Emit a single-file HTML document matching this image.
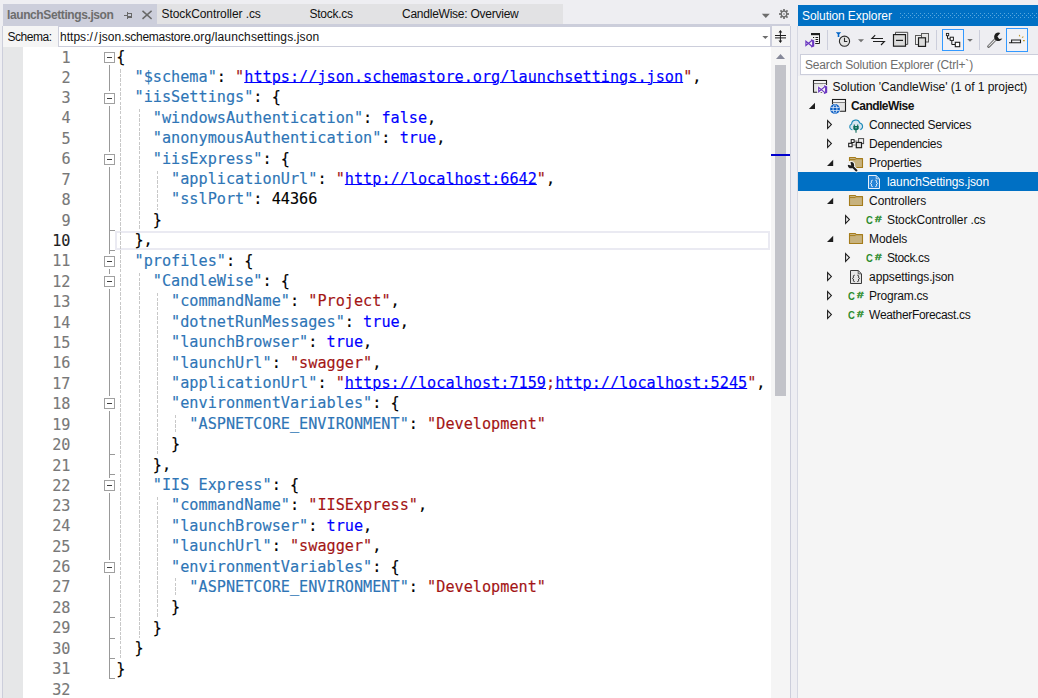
<!DOCTYPE html>
<html lang="en"><head><meta charset="utf-8"><title>launchSettings.json - CandleWise</title>
<style>
html,body{margin:0;padding:0}
body{width:1038px;height:698px;background:#EEEEF2;position:relative;overflow:hidden;font-family:"Liberation Sans",sans-serif;font-size:12px;color:#111}
.a{position:absolute}
.t{position:absolute;white-space:pre;line-height:16px;height:16px}
.code{position:absolute;left:116.2px;white-space:pre;font-family:"DejaVu Sans Mono","Liberation Mono",monospace;font-size:15.19px;line-height:20px;height:20px;color:#000;-webkit-text-stroke:0.15px}
.ln{position:absolute;left:30px;width:40.5px;text-align:right;white-space:pre;font-family:"DejaVu Sans Mono","Liberation Mono",monospace;font-size:15.17px;line-height:20px;height:20px;color:#787878;-webkit-text-stroke:0.12px}
.k{color:#2E75B6}.s{color:#A31515}.b{color:#0000FF}.u{color:#0000FF;text-decoration:underline;text-decoration-thickness:1px;text-underline-offset:0.4px}
.fb{position:absolute;left:104px;width:9px;height:9px;border:1px solid #A0A0A0;background:#fff;box-shadow:0 -2px 0 #fff,0 2px 0 #fff}
.fb i{position:absolute;left:2px;top:4px;width:5px;height:1px;background:#404040}
.g{position:absolute;width:1px;background:repeating-linear-gradient(to bottom,#C8C8C8 0,#C8C8C8 3.5px,transparent 3.5px,transparent 4.65px)}
.row{position:absolute;left:798px;width:240px;height:19px}
</style></head><body>

<div class="a" style="left:3px;top:4px;width:154px;height:22px;background:#CCCEDB"></div>
<div class="a" style="left:157px;top:4px;width:406px;height:20px;background:#E2E2E4"></div>
<div class="a" style="left:3px;top:24px;width:787px;height:2px;background:#CCCEDB"></div>
<div class="t" style="left:7.00px;top:6.84px;letter-spacing:-0.396px;color:#6D6D6D;font-weight:bold;">launchSettings.json</div>
<div class="t" style="left:161.50px;top:5.84px;letter-spacing:-0.074px;">StockController .cs</div>
<div class="t" style="left:309.50px;top:5.84px;letter-spacing:-0.268px;">Stock.cs</div>
<div class="t" style="left:402.00px;top:5.84px;letter-spacing:-0.244px;">CandleWise: Overview</div>
<svg class="a" style="left:123px;top:10px" width="11" height="11" viewBox="123 10 11 11"><path d="M124 15h4v1h-4zM127 12h1v7h-1zM128 13h4v1h-4zM131 13h1v4h-1zM128 16h4v2h-4z" fill="#686868"/></svg>
<svg class="a" style="left:142px;top:10px" width="10" height="10" viewBox="0 0 10 10"><path d="M0.5 0.9L9.6 8.9M9.6 0.9L0.5 8.9" fill="none" stroke="#686868" stroke-width="1.5"/></svg>
<svg class="a" style="left:755px;top:4px" width="40" height="20" viewBox="755 4 40 20"><path d="M761.8 13.8H769.8L765.8 17.9Z" fill="#6D6D6D"/><g fill="#6D6D6D" transform="translate(784 14)"><circle r="3.4"/><rect x="-0.85" y="-5" width="1.7" height="10"/><rect x="-5" y="-0.85" width="10" height="1.7"/><g transform="rotate(45)"><rect x="-0.85" y="-5" width="1.7" height="10"/><rect x="-5" y="-0.85" width="10" height="1.7"/></g><circle r="2.15" fill="#EEEEF2"/><circle r="0.8"/></g></svg>
<div class="a" style="left:3px;top:26px;width:787px;height:21px;background:#F5F5F5"></div>
<div class="t" style="left:7.50px;top:29.04px;letter-spacing:-0.480px;">Schema:</div>
<div class="a" style="left:58px;top:26px;width:711px;height:19px;background:#fff;border:1px solid #CCCEDB"></div>
<div class="t" style="left:60.00px;top:29.04px;"><span style="letter-spacing:0.025px">https:</span><span style="letter-spacing:1.466px">//</span><span style="letter-spacing:0.010px">json.</span><span style="letter-spacing:-0.253px">schemastore.</span><span style="letter-spacing:0.133px">org/launchsettings.json</span></div>
<svg class="a" style="left:760px;top:34px" width="12" height="6" viewBox="0 0 12 6"><path d="M2.3 2.1H8.3L5.3 5.1Z" fill="#6D6D6D"/></svg>
<div class="a" style="left:771px;top:26px;width:18px;height:20px;background:#F5F5F5;border-left:1px solid #CCCEDB;border-bottom:1px solid #CCCEDB"></div>
<svg class="a" style="left:772px;top:28px" width="18" height="17" viewBox="772 28 18 17"><path d="M775 35.5H786M775 37.9H786M780.4 31V42" stroke="#1E1E1E" stroke-width="1" fill="none"/><path d="M778.5 32.6L780.4 30L782.3 32.6ZM778.5 40.4L780.4 43L782.3 40.4Z" fill="#1E1E1E"/></svg>
<div class="a" style="left:3px;top:47px;width:768px;height:651px;background:#fff"></div>
<div class="a" style="left:3px;top:47px;width:20px;height:651px;background:#E6E7E8"></div>
<div class="a" style="left:2px;top:26px;width:1px;height:672px;background:#CCCEDB"></div>
<div class="a" style="left:115px;top:231px;width:651px;height:15px;border:2px solid #EAEAF2"></div>
<div class="a" style="left:109px;top:63px;width:1px;height:616px;background:#999"></div>
<div class="g" style="left:120px;top:69px;height:589px"></div>
<div class="g" style="left:139px;top:109px;height:120px"></div>
<div class="g" style="left:139px;top:273px;height:365px"></div>
<div class="g" style="left:157px;top:171px;height:39px"></div>
<div class="g" style="left:157px;top:293px;height:161px"></div>
<div class="g" style="left:157px;top:497px;height:120px"></div>
<div class="g" style="left:175px;top:415px;height:18px"></div>
<div class="g" style="left:175px;top:578px;height:18px"></div>
<div class="ln" style="top:48px">1</div>
<div class="code" style="top:47px">{</div>
<div class="ln" style="top:68px">2</div>
<div class="code" style="top:67px">  <span class="k">&quot;$schema&quot;</span>: <span class="s">&quot;</span><span class="u">https://json.schemastore.org/launchsettings.json</span><span class="s">&quot;</span>,</div>
<div class="ln" style="top:88px">3</div>
<div class="code" style="top:87px">  <span class="k">&quot;iisSettings&quot;</span>: {</div>
<div class="ln" style="top:108px">4</div>
<div class="code" style="top:108px">    <span class="k">&quot;windowsAuthentication&quot;</span>: <span class="b">false</span>,</div>
<div class="ln" style="top:129px">5</div>
<div class="code" style="top:128px">    <span class="k">&quot;anonymousAuthentication&quot;</span>: <span class="b">true</span>,</div>
<div class="ln" style="top:149px">6</div>
<div class="code" style="top:149px">    <span class="k">&quot;iisExpress&quot;</span>: {</div>
<div class="ln" style="top:170px">7</div>
<div class="code" style="top:169px">      <span class="k">&quot;applicationUrl&quot;</span>: <span class="s">&quot;</span><span class="u">http://localhost:6642</span><span class="s">&quot;</span>,</div>
<div class="ln" style="top:190px">8</div>
<div class="code" style="top:189px">      <span class="k">&quot;sslPort&quot;</span>: 44366</div>
<div class="ln" style="top:211px">9</div>
<div class="code" style="top:210px">    }</div>
<div class="ln" style="top:231px;color:#1E1E1E">10</div>
<div class="code" style="top:230px">  },</div>
<div class="ln" style="top:251px">11</div>
<div class="code" style="top:251px">  <span class="k">&quot;profiles&quot;</span>: {</div>
<div class="ln" style="top:272px">12</div>
<div class="code" style="top:271px">    <span class="k">&quot;CandleWise&quot;</span>: {</div>
<div class="ln" style="top:292px">13</div>
<div class="code" style="top:291px">      <span class="k">&quot;commandName&quot;</span>: <span class="s">&quot;Project&quot;</span>,</div>
<div class="ln" style="top:313px">14</div>
<div class="code" style="top:312px">      <span class="k">&quot;dotnetRunMessages&quot;</span>: <span class="b">true</span>,</div>
<div class="ln" style="top:333px">15</div>
<div class="code" style="top:332px">      <span class="k">&quot;launchBrowser&quot;</span>: <span class="b">true</span>,</div>
<div class="ln" style="top:353px">16</div>
<div class="code" style="top:353px">      <span class="k">&quot;launchUrl&quot;</span>: <span class="s">&quot;swagger&quot;</span>,</div>
<div class="ln" style="top:374px">17</div>
<div class="code" style="top:373px">      <span class="k">&quot;applicationUrl&quot;</span>: <span class="s">&quot;</span><span class="u">https://localhost:7159</span><span class="s">;</span><span class="u">http://localhost:5245</span><span class="s">&quot;</span>,</div>
<div class="ln" style="top:394px">18</div>
<div class="code" style="top:393px">      <span class="k">&quot;environmentVariables&quot;</span>: {</div>
<div class="ln" style="top:415px">19</div>
<div class="code" style="top:414px">        <span class="k">&quot;ASPNETCORE_ENVIRONMENT&quot;</span>: <span class="s">&quot;Development&quot;</span></div>
<div class="ln" style="top:435px">20</div>
<div class="code" style="top:434px">      }</div>
<div class="ln" style="top:456px">21</div>
<div class="code" style="top:455px">    },</div>
<div class="ln" style="top:476px">22</div>
<div class="code" style="top:475px">    <span class="k">&quot;IIS Express&quot;</span>: {</div>
<div class="ln" style="top:496px">23</div>
<div class="code" style="top:495px">      <span class="k">&quot;commandName&quot;</span>: <span class="s">&quot;IISExpress&quot;</span>,</div>
<div class="ln" style="top:516px">24</div>
<div class="code" style="top:516px">      <span class="k">&quot;launchBrowser&quot;</span>: <span class="b">true</span>,</div>
<div class="ln" style="top:537px">25</div>
<div class="code" style="top:536px">      <span class="k">&quot;launchUrl&quot;</span>: <span class="s">&quot;swagger&quot;</span>,</div>
<div class="ln" style="top:557px">26</div>
<div class="code" style="top:557px">      <span class="k">&quot;environmentVariables&quot;</span>: {</div>
<div class="ln" style="top:577px">27</div>
<div class="code" style="top:577px">        <span class="k">&quot;ASPNETCORE_ENVIRONMENT&quot;</span>: <span class="s">&quot;Development&quot;</span></div>
<div class="ln" style="top:598px">28</div>
<div class="code" style="top:597px">      }</div>
<div class="ln" style="top:618px">29</div>
<div class="code" style="top:618px">    }</div>
<div class="ln" style="top:639px">30</div>
<div class="code" style="top:638px">  }</div>
<div class="ln" style="top:659px">31</div>
<div class="code" style="top:659px">}</div>
<div class="ln" style="top:680px">32</div>
<div class="fb" style="top:52px"><i></i></div>
<div class="fb" style="top:93px"><i></i></div>
<div class="fb" style="top:154px"><i></i></div>
<div class="fb" style="top:256px"><i></i></div>
<div class="fb" style="top:276px"><i></i></div>
<div class="fb" style="top:398px"><i></i></div>
<div class="fb" style="top:480px"><i></i></div>
<div class="fb" style="top:562px"><i></i></div>
<div class="a" style="left:109px;top:230px;width:6px;height:1px;background:#999"></div>
<div class="a" style="left:109px;top:250px;width:6px;height:1px;background:#999"></div>
<div class="a" style="left:109px;top:454px;width:6px;height:1px;background:#999"></div>
<div class="a" style="left:109px;top:474px;width:6px;height:1px;background:#999"></div>
<div class="a" style="left:109px;top:617px;width:6px;height:1px;background:#999"></div>
<div class="a" style="left:109px;top:638px;width:6px;height:1px;background:#999"></div>
<div class="a" style="left:109px;top:658px;width:6px;height:1px;background:#999"></div>
<div class="a" style="left:109px;top:678px;width:6px;height:1px;background:#999"></div>
<div class="a" style="left:771px;top:47px;width:19px;height:651px;background:#F5F5F5"></div>
<svg class="a" style="left:776px;top:54px" width="9" height="5" viewBox="0 0 9 5"><path d="M0 5H9L4.5 0Z" fill="#868999"/></svg>
<div class="a" style="left:775px;top:65px;width:11px;height:331px;background:#C2C3C9"></div>
<div class="a" style="left:771px;top:154px;width:19px;height:2px;background:#0000CD"></div>
<div class="a" style="left:790px;top:26px;width:1px;height:672px;background:#CCCEDB"></div>
<div class="a" style="left:797px;top:26px;width:1px;height:672px;background:#D6D8E2"></div>
<div class="a" style="left:798px;top:76px;width:240px;height:622px;background:#F5F5F5"></div>
<div class="a" style="left:798px;top:5px;width:240px;height:21px;background:#0070C4"></div>
<div class="t" style="left:802.00px;top:8.04px;letter-spacing:-0.093px;color:#fff;">Solution Explorer</div>
<svg class="a" style="left:900px;top:12px" width="138" height="8" viewBox="900 12 138 8"><path d="M900 13h1v1h-1zM900 17h1v1h-1zM902 15h1v1h-1zM904 13h1v1h-1zM904 17h1v1h-1zM906 15h1v1h-1zM908 13h1v1h-1zM908 17h1v1h-1zM910 15h1v1h-1zM912 13h1v1h-1zM912 17h1v1h-1zM914 15h1v1h-1zM916 13h1v1h-1zM916 17h1v1h-1zM918 15h1v1h-1zM920 13h1v1h-1zM920 17h1v1h-1zM922 15h1v1h-1zM924 13h1v1h-1zM924 17h1v1h-1zM926 15h1v1h-1zM928 13h1v1h-1zM928 17h1v1h-1zM930 15h1v1h-1zM932 13h1v1h-1zM932 17h1v1h-1zM934 15h1v1h-1zM936 13h1v1h-1zM936 17h1v1h-1zM938 15h1v1h-1zM940 13h1v1h-1zM940 17h1v1h-1zM942 15h1v1h-1zM944 13h1v1h-1zM944 17h1v1h-1zM946 15h1v1h-1zM948 13h1v1h-1zM948 17h1v1h-1zM950 15h1v1h-1zM952 13h1v1h-1zM952 17h1v1h-1zM954 15h1v1h-1zM956 13h1v1h-1zM956 17h1v1h-1zM958 15h1v1h-1zM960 13h1v1h-1zM960 17h1v1h-1zM962 15h1v1h-1zM964 13h1v1h-1zM964 17h1v1h-1zM966 15h1v1h-1zM968 13h1v1h-1zM968 17h1v1h-1zM970 15h1v1h-1zM972 13h1v1h-1zM972 17h1v1h-1zM974 15h1v1h-1zM976 13h1v1h-1zM976 17h1v1h-1zM978 15h1v1h-1zM980 13h1v1h-1zM980 17h1v1h-1zM982 15h1v1h-1zM984 13h1v1h-1zM984 17h1v1h-1zM986 15h1v1h-1zM988 13h1v1h-1zM988 17h1v1h-1zM990 15h1v1h-1zM992 13h1v1h-1zM992 17h1v1h-1zM994 15h1v1h-1zM996 13h1v1h-1zM996 17h1v1h-1zM998 15h1v1h-1zM1000 13h1v1h-1zM1000 17h1v1h-1zM1002 15h1v1h-1zM1004 13h1v1h-1zM1004 17h1v1h-1zM1006 15h1v1h-1zM1008 13h1v1h-1zM1008 17h1v1h-1zM1010 15h1v1h-1zM1012 13h1v1h-1zM1012 17h1v1h-1zM1014 15h1v1h-1zM1016 13h1v1h-1zM1016 17h1v1h-1zM1018 15h1v1h-1zM1020 13h1v1h-1zM1020 17h1v1h-1zM1022 15h1v1h-1zM1024 13h1v1h-1zM1024 17h1v1h-1zM1026 15h1v1h-1zM1028 13h1v1h-1zM1028 17h1v1h-1zM1030 15h1v1h-1zM1032 13h1v1h-1zM1032 17h1v1h-1zM1034 15h1v1h-1zM1036 13h1v1h-1zM1036 17h1v1h-1z" fill="#59A8DE"/></svg>
<div class="a" style="left:800px;top:54px;width:240px;height:19px;background:#fff;border:1px solid #CCCEDB"></div>
<div class="t" style="left:805.00px;top:56.64px;letter-spacing:-0.174px;color:#6D6D6D;">Search Solution Explorer (Ctrl+`)</div>
<svg class="a" style="left:798px;top:26px" width="240" height="28" viewBox="798 26 240 28">
<path d="M811.5 43.5H819.5V34H811.5" fill="#F5F5F5" stroke="#1E1E1E" stroke-width="1"/>
<rect x="811" y="33" width="9" height="2.2" fill="#1E1E1E"/>
<path d="M813 37.5H814.2M815.5 37.5H818.2M813 39.5H814.2M815.5 39.5H818.2M815.5 41.5H818.2" stroke="#1E1E1E" stroke-width="1" fill="none"/>
<path d="M812.20 40.30L805.90 45.50V41.30L812.20 46.50" fill="none" stroke="#EEEEF2" stroke-width="3.40" stroke-linejoin="round"/><path d="M811.40 39.20L814.20 40.40L814.20 46.40L811.40 47.60Z" fill="#EEEEF2" stroke="#EEEEF2" stroke-width="2"/><path d="M812.20 40.30L805.90 45.50V41.30L812.20 46.50" fill="none" stroke="#6A36C1" stroke-width="1.15" stroke-linejoin="miter"/><path d="M811.40 39.20L814.20 40.40L814.20 46.40L811.40 47.60L810.80 46.80L812.10 45.80L812.10 41.00L810.80 40.00Z" fill="#6A36C1"/>
<path d="M827.5 30V50" stroke="#CCCEDB" stroke-width="1"/>
<path d="M936.5 30V50" stroke="#CCCEDB" stroke-width="1"/>
<path d="M979.5 30V50" stroke="#CCCEDB" stroke-width="1"/>
<path d="M835.8 32.2H841.2L839.3 34.3V37H837.7V34.3Z" fill="#0063C6"/>
<circle cx="844.5" cy="41.2" r="5.1" fill="#E4E4E4" stroke="#2B2B2B" stroke-width="1.1"/>
<path d="M844.5 37.8V41.5H847.3" fill="none" stroke="#2B2B2B" stroke-width="1.1"/>
<path d="M858 39.2H864L861 42.2Z" fill="#717171"/>
<path d="M875.2 35.2L871.9 38.5H883M873 41.5H884.4L881 45" fill="none" stroke="#1E1E1E" stroke-width="1.1"/>
<path d="M895.5 34V32.3H907.7V44.4H906" fill="none" stroke="#4A4A4A" stroke-width="1"/>
<rect x="893.5" y="34.6" width="12" height="11.6" fill="#DCDCDC" stroke="#1E1E1E" stroke-width="1.2"/>
<path d="M896 40.4H903" stroke="#1E1E1E" stroke-width="1.2"/>
<rect x="915.5" y="35.5" width="6.5" height="9" fill="#F0F0F0" stroke="#5A5A5A" stroke-width="1"/>
<rect x="921.5" y="33.5" width="7" height="8.5" fill="#E4E4E4" stroke="#5A5A5A" stroke-width="1"/>
<rect x="918.5" y="37.8" width="7" height="8.6" fill="#DCDCDC" stroke="#1E1E1E" stroke-width="1.2"/>
<rect x="942.5" y="29.5" width="21" height="21" fill="#F2F2F6" stroke="#3399FF" stroke-width="1"/>
<path d="M947.5 35.5V38.8H950M951.8 40.5V44.5H955" fill="none" stroke="#1E1E1E" stroke-width="1"/>
<rect x="946.4" y="33.4" width="2.3" height="2.3" fill="#fff" stroke="#1E1E1E" stroke-width="0.9"/>
<rect x="950.2" y="37.2" width="3.2" height="3.2" fill="#fff" stroke="#1E1E1E" stroke-width="1"/>
<rect x="955.3" y="42.3" width="4.4" height="4.4" fill="#fff" stroke="#1E1E1E" stroke-width="1.1"/>
<path d="M967.2 38.9H972.8L970 41.8Z" fill="#717171"/>
<path d="M988.6 46.4L996.4 38.6" stroke="#5A5A5A" stroke-width="2.8" stroke-linecap="round"/>
<path d="M988.8 46.2L996 39" stroke="#E4E4E4" stroke-width="1.2" stroke-linecap="round"/>
<path d="M1000.3 32.9A4.3 4.3 0 1 0 1002.3 38.6L999.2 38.9L997.4 36.4Z" fill="#1E1E1E"/>
<rect x="1006.5" y="28.5" width="21" height="23" fill="#F2F2F6" stroke="#3399FF" stroke-width="1"/>
<path d="M1009 42.7H1020.5V40H1011.6V42.7" fill="none" stroke="#1E1E1E" stroke-width="1.1"/>
<path d="M1019.3 34.8L1019.8 36.4M1022 37.6L1023.4 36.6M1023 40.6H1024.8" stroke="#C29B2B" stroke-width="1.1" fill="none"/>
</svg>
<div class="a" style="left:798px;top:172px;width:240px;height:19px;background:#0070C4"></div>
<div class="t" style="left:832.50px;top:79.14px;letter-spacing:-0.049px;">Solution &#x27;CandleWise&#x27; (1 of 1 project)</div>
<div class="t" style="left:851.10px;top:98.14px;letter-spacing:-0.521px;font-weight:bold;">CandleWise</div>
<div class="t" style="left:869.10px;top:117.14px;letter-spacing:-0.300px;">Connected Services</div>
<div class="t" style="left:869.10px;top:136.14px;letter-spacing:-0.327px;">Dependencies</div>
<div class="t" style="left:869.10px;top:155.14px;letter-spacing:-0.239px;">Properties</div>
<div class="t" style="left:887.00px;top:174.14px;letter-spacing:-0.109px;color:#fff;">launchSettings.json</div>
<div class="t" style="left:869.10px;top:193.14px;letter-spacing:-0.084px;">Controllers</div>
<div class="t" style="left:887.00px;top:212.14px;letter-spacing:-0.116px;">StockController .cs</div>
<div class="t" style="left:869.10px;top:231.14px;letter-spacing:-0.081px;">Models</div>
<div class="t" style="left:887.00px;top:250.14px;letter-spacing:-0.381px;">Stock.cs</div>
<div class="t" style="left:869.10px;top:269.14px;letter-spacing:-0.120px;">appsettings.json</div>
<div class="t" style="left:869.10px;top:288.14px;letter-spacing:-0.235px;">Program.cs</div>
<div class="t" style="left:869.10px;top:307.14px;letter-spacing:-0.325px;">WeatherForecast.cs</div>
<svg class="a" style="left:798px;top:76px" width="240" height="250" viewBox="798 76 240 250">
<rect x="813.5" y="80.5" width="13" height="3" fill="#fff" stroke="#1E1E1E" stroke-width="1.1"/><path d="M813.5 83.5V92.3H826.5V83.5" fill="#E4E4E4" stroke="#1E1E1E" stroke-width="1.1"/>
<path d="M825.16 86.35L818.72 91.80V87.40L825.16 92.85" fill="none" stroke="#F5F5F5" stroke-width="3.48" stroke-linejoin="round"/><path d="M824.34 85.20L827.20 86.46L827.20 92.74L824.34 94.00Z" fill="#F5F5F5" stroke="#F5F5F5" stroke-width="2"/><path d="M825.16 86.35L818.72 91.80V87.40L825.16 92.85" fill="none" stroke="#6A36C1" stroke-width="1.18" stroke-linejoin="miter"/><path d="M824.34 85.20L827.20 86.46L827.20 92.74L824.34 94.00L823.72 93.16L825.05 92.11L825.05 87.09L823.72 86.04Z" fill="#6A36C1"/>
<path d="M815.0 102.8V109.0H808.8Z" fill="#1E1E1E"/>
<rect x="832.5" y="99.5" width="13" height="3" fill="#fff" stroke="#1E1E1E" stroke-width="1.1"/><path d="M832.5 102.5V111.3H845.5V102.5" fill="#E4E4E4" stroke="#1E1E1E" stroke-width="1.1"/>
<circle cx="835" cy="109" r="5.6" fill="#F5F5F5"/>
<circle cx="835" cy="109" r="4.9" fill="#0B5FC4"/>
<g stroke="#E8F0FA" stroke-width="0.8" fill="none"><ellipse cx="835" cy="109" rx="2" ry="4.3"/><path d="M830.5 107.4H839.5M830.5 110.6H839.5"/></g>
<path d="M827.6 120.7V128.5L831.4 124.6Z" fill="none" stroke="#1E1E1E" stroke-width="1.1"/>
<path d="M852.3 129.9A3.1 3.1 0 0 1 851.6 124A4.2 4.2 0 0 1 859.8 123A3.5 3.5 0 0 1 860.3 129.7" fill="#D7E6EF" stroke="#1E8BB8" stroke-width="1.1"/>
<path d="M854.3 124.5V126.2M857.7 124.5V126.2" stroke="#0B6B5A" stroke-width="1.1"/>
<path d="M853.3 126H858.7V128.2Q858.7 130.3 856 130.3Q853.3 130.3 853.3 128.2Z" fill="#0B6B5A"/>
<path d="M856 130V132.8" stroke="#0B6B5A" stroke-width="1.1"/>
<path d="M855.2 127.2H856.8L856 129Z" fill="#D7E6EF"/>
<path d="M827.6 139.7V147.5L831.4 143.6Z" fill="none" stroke="#1E1E1E" stroke-width="1.1"/>
<path d="M852.5 141.2H857.5M852.5 145H856" stroke="#8A8A8A" stroke-width="1.2"/>
<rect x="858.6" y="138.6" width="5" height="5" fill="#F0F0F0" stroke="#4A4A4A" stroke-width="1"/>
<rect x="851.2" y="139.6" width="2.9" height="2.9" fill="#fff" stroke="#1E1E1E" stroke-width="1"/>
<rect x="848.7" y="143.3" width="3.4" height="3.4" fill="#fff" stroke="#1E1E1E" stroke-width="1.1"/>
<rect x="856.3" y="142.5" width="5.2" height="5.2" fill="#E8E8E8" stroke="#1E1E1E" stroke-width="1.2"/>
<path d="M833.2 159.8V166.0H827.0Z" fill="#1E1E1E"/>
<path d="M849.5 157.5H855.3L856.3 158.6H862.5V167.5H849.5Z" fill="#C7B27E" stroke="#A57C1B" stroke-width="1.1" stroke-linejoin="round"/><path d="M849.5 159.6H855.6" stroke="#A57C1B" stroke-width="1"/>
<circle cx="851" cy="165.2" r="4.1" fill="#F5F5F5"/>
<path d="M852.6 166.8L856.4 170.4" stroke="#F5F5F5" stroke-width="4" stroke-linecap="round"/>
<path d="M852.4 166.6L856.4 170.4" stroke="#1E1E1E" stroke-width="2.1" stroke-linecap="round"/>
<circle cx="851" cy="165.2" r="3.1" fill="#1E1E1E"/>
<path d="M851.2 165.4L846.6 164.4L850.2 160.8Z" fill="#F5F5F5"/>
<path d="M868.5 175.5H876.2L879.5 178.8V188.5H868.5Z" fill="#2684D6" stroke="#E8F1FA" stroke-width="1"/><path d="M876.2 175.8V178.8H879.3" fill="none" stroke="#E8F1FA" stroke-width="0.8"/><path d="M872.60 180.20Q871.40 180.20 871.40 181.40V182.60L870.50 183.40L871.40 184.20V185.40Q871.40 186.60 872.60 186.60" fill="none" stroke="#FFFFFF" stroke-width="1"/><path d="M875.40 180.20Q876.60 180.20 876.60 181.40V182.60L877.50 183.40L876.60 184.20V185.40Q876.60 186.60 875.40 186.60" fill="none" stroke="#FFFFFF" stroke-width="1"/>
<path d="M833.2 197.8V204.0H827.0Z" fill="#1E1E1E"/>
<path d="M849.5 195.5H855.3L856.3 196.6H862.5V205.5H849.5Z" fill="#C7B27E" stroke="#A57C1B" stroke-width="1.1" stroke-linejoin="round"/><path d="M849.5 197.6H855.6" stroke="#A57C1B" stroke-width="1"/>
<path d="M845.6 215.7V223.5L849.4 219.6Z" fill="none" stroke="#1E1E1E" stroke-width="1.1"/>
<path d="M833.2 235.8V242.0H827.0Z" fill="#1E1E1E"/>
<path d="M849.5 233.5H855.3L856.3 234.6H862.5V243.5H849.5Z" fill="#C7B27E" stroke="#A57C1B" stroke-width="1.1" stroke-linejoin="round"/><path d="M849.5 235.6H855.6" stroke="#A57C1B" stroke-width="1"/>
<path d="M845.6 253.7V261.5L849.4 257.6Z" fill="none" stroke="#1E1E1E" stroke-width="1.1"/>
<path d="M827.6 272.7V280.5L831.4 276.6Z" fill="none" stroke="#1E1E1E" stroke-width="1.1"/>
<path d="M850.5 270.5H858.2L861.5 273.8V283.5H850.5Z" fill="#E6E6E6" stroke="#3A3A3A" stroke-width="1"/><path d="M858.2 270.8V273.8H861.3" fill="none" stroke="#3A3A3A" stroke-width="0.8"/><path d="M854.60 275.20Q853.40 275.20 853.40 276.40V277.60L852.50 278.40L853.40 279.20V280.40Q853.40 281.60 854.60 281.60" fill="none" stroke="#1E1E1E" stroke-width="1"/><path d="M857.40 275.20Q858.60 275.20 858.60 276.40V277.60L859.50 278.40L858.60 279.20V280.40Q858.60 281.60 857.40 281.60" fill="none" stroke="#1E1E1E" stroke-width="1"/>
<path d="M827.6 291.7V299.5L831.4 295.6Z" fill="none" stroke="#1E1E1E" stroke-width="1.1"/>
<path d="M827.6 310.7V318.5L831.4 314.6Z" fill="none" stroke="#1E1E1E" stroke-width="1.1"/>
</svg>
<div class="t" style="left:866.3px;top:211.9px;color:#2C8C2C;font-weight:bold;font-size:11px;transform-origin:0 0;transform:scaleX(0.86)">C</div>
<div class="t" style="left:874.6px;top:210.8px;color:#2C8C2C;font-weight:bold;font-size:8.8px;-webkit-text-stroke:0.35px #2C8C2C;transform-origin:0 0;transform:scaleX(1.36)">#</div>
<div class="t" style="left:866.3px;top:249.9px;color:#2C8C2C;font-weight:bold;font-size:11px;transform-origin:0 0;transform:scaleX(0.86)">C</div>
<div class="t" style="left:874.6px;top:248.8px;color:#2C8C2C;font-weight:bold;font-size:8.8px;-webkit-text-stroke:0.35px #2C8C2C;transform-origin:0 0;transform:scaleX(1.36)">#</div>
<div class="t" style="left:848.3px;top:287.9px;color:#2C8C2C;font-weight:bold;font-size:11px;transform-origin:0 0;transform:scaleX(0.86)">C</div>
<div class="t" style="left:856.6px;top:286.8px;color:#2C8C2C;font-weight:bold;font-size:8.8px;-webkit-text-stroke:0.35px #2C8C2C;transform-origin:0 0;transform:scaleX(1.36)">#</div>
<div class="t" style="left:848.3px;top:306.9px;color:#2C8C2C;font-weight:bold;font-size:11px;transform-origin:0 0;transform:scaleX(0.86)">C</div>
<div class="t" style="left:856.6px;top:305.8px;color:#2C8C2C;font-weight:bold;font-size:8.8px;-webkit-text-stroke:0.35px #2C8C2C;transform-origin:0 0;transform:scaleX(1.36)">#</div>
</body></html>
